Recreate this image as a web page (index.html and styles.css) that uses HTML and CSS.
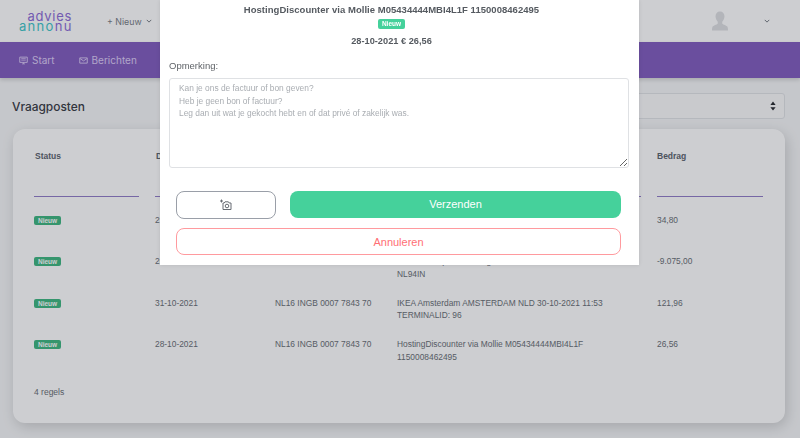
FILE: index.html
```html
<!DOCTYPE html>
<html lang="nl">

<head>
    <meta charset="UTF-8">
    <title>Vraagposten</title>
    <link rel="stylesheet" href="styles.css">
</head>

<body>
    <header class="topbar">
        <div class="logo">
            <span class="logo-top">advies</span>
            <span class="logo-bottom"><span class="logo-teal">anno</span>nu</span>
        </div>
        <div class="new-link">+ Nieuw
            <svg class="chevron" viewBox="0 0 8 5"><path d="M1 1l3 3 3-3" /></svg>
        </div>
        <div class="user">
            <svg class="avatar" viewBox="0 0 20 24">
                <path d="M10 0c3.600 0 5.600 2.600 5.600 6.200 0 2.800-1.200 5.200-2.800 6.600v2.200c0 1 4.200 2 6 3.600 .8 .8 1.200 2.400 1.200 5.400H0c0-3 .4-4.600 1.200-5.400 1.800-1.600 6-2.600 6-3.600v-2.200C5.600 11.400 4.400 9 4.400 6.200 4.400 2.600 6.400 0 10 0z" />
            </svg>
            <svg class="chevron" viewBox="0 0 8 5"><path d="M1 1l3 3 3-3" /></svg>
        </div>
    </header>

    <nav class="mainnav">
        <a class="nav-item">
            <svg class="nav-icon" viewBox="0 0 12 12"><path d="M1 1.500h10v7H1z" /><path class="solid" d="M3 3.500h6M3 5.500h6M4 10.500h4M6 8.500v2" /></svg>
            Start
        </a>
        <a class="nav-item">
            <svg class="nav-icon" viewBox="0 0 12 12"><path d="M1 2.500h10v7H1z" /><path d="M1.500 3.500L6 6.500l4.500-3" /></svg>
            Berichten
        </a>
    </nav>

    <main class="content">
        <div class="page-head">
            <h1>Vraagposten</h1>
            <div class="select-box">
                <svg class="select-arrows" viewBox="0 0 8 12"><path d="M4 0l3.500 4.500h-7zM4 12L.5 7.500h7z" /></svg>
            </div>
        </div>

        <section class="card">
            <table class="posts">
                <thead>
                    <tr>
                        <th class="col-status">Status</th>
                        <th class="col-date">Datum</th>
                        <th class="col-account">Rekening</th>
                        <th class="col-desc">Omschrijving</th>
                        <th class="col-amount">Bedrag</th>
                    </tr>
                </thead>
                <tbody>
                    <tr>
                        <td><span class="badge">Nieuw</span></td>
                        <td>29-11-2021</td>
                        <td>NL16 INGB 0007 7843 70</td>
                        <td>Albert Heijn 1234 AMSTERDAM NLD 29-11-2021<br>TERMINALID: 12</td>
                        <td>34,80</td>
                    </tr>
                    <tr>
                        <td><span class="badge">Nieuw</span></td>
                        <td>26-11-2021</td>
                        <td>NL16 INGB 0007 7843 70</td>
                        <td>Naar onze spaarrekening<br>NL94IN</td>
                        <td>-9.075,00</td>
                    </tr>
                    <tr>
                        <td><span class="badge">Nieuw</span></td>
                        <td>31-10-2021</td>
                        <td>NL16 INGB 0007 7843 70</td>
                        <td>IKEA Amsterdam AMSTERDAM NLD 30-10-2021 11:53<br>TERMINALID: 96</td>
                        <td>121,96</td>
                    </tr>
                    <tr>
                        <td><span class="badge">Nieuw</span></td>
                        <td>28-10-2021</td>
                        <td>NL16 INGB 0007 7843 70</td>
                        <td>HostingDiscounter via Mollie M05434444MBI4L1F<br>1150008462495</td>
                        <td>26,56</td>
                    </tr>
                </tbody>
            </table>
            <p class="row-count">4 regels</p>
        </section>
    </main>

    <div class="backdrop"></div>

    <div class="modal">
        <div class="modal-head">
            <div class="modal-title">HostingDiscounter via Mollie M05434444MBI4L1F 1150008462495</div>
            <span class="badge badge-bright">Nieuw</span>
            <div class="modal-title modal-date">28-10-2021 € 26,56</div>
        </div>

        <label class="field-label" for="remark">Opmerking:</label>
        <textarea id="remark" class="remark" placeholder="Kan je ons de factuur of bon geven?&#10;Heb je geen bon of factuur?&#10;Leg dan uit wat je gekocht hebt en of dat privé of zakelijk was."></textarea>

        <div class="actions">
            <div class="action-row">
                <button class="btn btn-photo">
                    <svg class="camera" viewBox="0 0 12 12">
                        <path d="M3 4h1.200l.8-1.200h3.400l.8 1.200H11v6.500H3z" />
                        <circle cx="7" cy="7" r="1.800" />
                        <path d="M1.500 .5v3M0 2h3" />
                    </svg>
                </button>
                <button class="btn btn-send">Verzenden</button>
            </div>
            <button class="btn btn-cancel">Annuleren</button>
        </div>
    </div>
</body>

</html>
```
FILE: styles.css
```css
* {
    box-sizing: border-box;
}

html,
body {
    height: 100%;
}

body {
    margin: 0;
    overflow: hidden;
    font-family: "Liberation Sans", Arial, sans-serif;
    font-size: 10px;
    color: #555b63;
    background-color: #f6f7f8;
}

.topbar {
    display: flex;
    align-items: center;
    height: 42px;
    padding: 0 30px 0 19px;
    background-color: #ffffff;
}

.logo {
    display: flex;
    flex-direction: column;
    width: 53px;
    font-family: Inter, sans-serif;
    font-size: 13px;
    line-height: 10px;
    text-align: right;
    color: #8e6fd8;
}

.logo-top {
    letter-spacing: 0.7px;
}

.logo-bottom {
    letter-spacing: 1.300px;
}

.logo-teal {
    color: #45c6c9;
}

.new-link {
    display: flex;
    align-items: center;
    gap: 4px;
    margin-left: 35px;
    font-family: Inter, sans-serif;
    font-size: 8.800px;
    color: #7b8188;
}

.user {
    display: flex;
    align-items: center;
    gap: 36px;
    margin-left: auto;
}

.avatar {
    width: 16px;
    height: 20px;
    fill: #dfe0e3;
}

.chevron {
    width: 6px;
    height: 4px;
    fill: none;
    stroke: #6a7078;
    stroke-width: 1.200;
}

.mainnav {
    display: flex;
    align-items: center;
    gap: 24px;
    height: 36px;
    padding-left: 19px;
    background-color: #8460c0;
    box-shadow: 0 2px 4px rgba(0, 0, 0, 0.15);
}

.nav-item {
    display: flex;
    align-items: center;
    gap: 4px;
    font-family: Inter, sans-serif;
    font-size: 10px;
    color: #ddcdf5;
}

.nav-icon {
    width: 9px;
    height: 9px;
    fill: none;
    stroke: #ddcdf5;
    stroke-width: 1.200;
}

.nav-icon .solid {
    stroke-width: 1;
}

.content {
    padding: 15px 15px 0 12px;
}

.page-head {
    display: flex;
    align-items: center;
    justify-content: space-between;
    height: 26px;
    margin-bottom: 10px;
}

.page-head h1 {
    margin: 0;
    font-family: Inter, sans-serif;
    font-size: 11.900px;
    font-weight: 500;
    color: #3d4148;
}

.select-box {
    display: flex;
    align-items: center;
    justify-content: flex-end;
    width: 380px;
    height: 26px;
    padding-right: 8px;
    background-color: #fafafb;
    border: 1px solid #e2e4e7;
    border-radius: 3px;
}

.select-arrows {
    width: 6px;
    height: 10px;
    fill: #2b2e33;
}

.card {
    height: 294px;
    margin-left: 1px;
    padding: 0 21px;
    background-color: #ffffff;
    border-radius: 12px;
    box-shadow: 2px 4px 14px rgba(0, 0, 0, 0.16);
}

.posts {
    border-collapse: separate;
    border-spacing: 16px 0;
    margin-left: -16px;
    table-layout: fixed;
    width: 761px;
    line-height: 12.500px;
}

.posts th {
    height: 68px;
    padding: 21px 0 0 1px;
    font-weight: bold;
    font-size: 8.500px;
    text-align: left;
    vertical-align: top;
    color: #5e6670;
    border-bottom: 1px solid #937fc9;
}

.posts td {
    padding: 16.500px 0 0;
    vertical-align: top;
    font-size: 8.400px;
    color: #6c7177;
}

.col-status {
    width: 105px;
}

.col-date {
    width: 104px;
}

.col-account {
    width: 106px;
}

.col-desc {
    width: 244px;
}

.posts .col-amount {
    width: 106px;
    padding-left: 0;
}

.badge {
    display: inline-block;
    margin-top: 2px;
    padding: 0 4px;
    height: 9px;
    font-size: 6.500px;
    font-weight: bold;
    line-height: 9px;
    color: #ffffff;
    background-color: #41b883;
    border-radius: 2px;
}

.row-count {
    margin: 24px 0 0;
    font-size: 8.500px;
    color: #6c7177;
}

.backdrop {
    position: fixed;
    inset: 0;
    background-color: rgba(5, 10, 25, 0.2);
}

.modal {
    position: fixed;
    top: 0;
    left: 160px;
    width: 479px;
    height: 265px;
    padding: 0 10px 0 9px;
    background-color: #ffffff;
    box-shadow: 0 0 4px rgba(0, 0, 0, 0.1);
}

.modal-head {
    padding: 3px 15px 0 0;
    text-align: center;
}

.modal-title {
    font-size: 9.500px;
    font-weight: bold;
    line-height: 13px;
    letter-spacing: 0.03px;
    color: #555a60;
}

.modal-date {
    margin-top: 6px;
    font-size: 9.200px;
}

.badge-bright {
    display: block;
    width: 27px;
    height: 10px;
    margin: 3px auto 0;
    padding: 0;
    line-height: 10px;
    text-align: center;
    background-color: #45d19b;
}

.field-label {
    display: block;
    margin-top: 12px;
    font-size: 9.500px;
    line-height: 12px;
    color: #5f6368;
}

.remark {
    display: block;
    width: 100%;
    height: 90px;
    margin-top: 6px;
    padding: 3px 9px;
    font-family: "Liberation Sans", Arial, sans-serif;
    font-size: 8.400px;
    line-height: 12.500px;
    background-color: #ffffff;
    border: 1px solid #dfe1e4;
    border-radius: 3px;
}

.remark::placeholder {
    color: #a9adb2;
    opacity: 1;
}

.actions {
    display: flex;
    flex-direction: column;
    gap: 9px;
    padding: 23px 8px 0 7px;
}

.action-row {
    display: flex;
    gap: 14px;
}

.btn {
    height: 27px;
    font-family: "Liberation Sans", Arial, sans-serif;
    font-size: 11px;
    border-radius: 8px;
    background-color: #ffffff;
}

.btn-photo {
    display: flex;
    align-items: center;
    justify-content: center;
    flex: 0 0 100px;
    height: 28px;
    border: 1px solid #9a9fa8;
}

.camera {
    width: 12px;
    height: 12px;
    fill: none;
    stroke: #666b72;
    stroke-width: 1;
}

.btn-send {
    flex: 1;
    padding-bottom: 2px;
    color: #ffffff;
    background-color: #45d19b;
    border: none;
}

.btn-cancel {
    color: #ff6f75;
    border: 1px solid #ff9a9e;
}
```
